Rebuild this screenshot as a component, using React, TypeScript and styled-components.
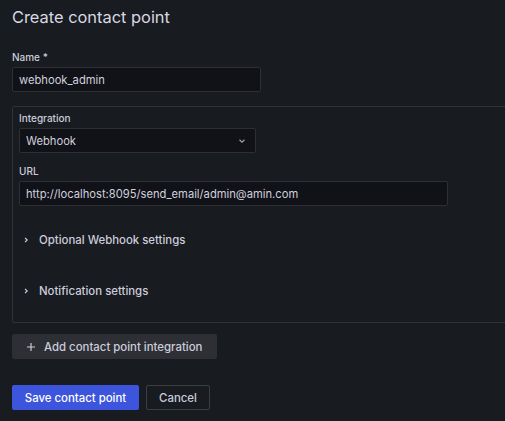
import React from "react";
import styled, { createGlobalStyle } from "styled-components";

const Global = createGlobalStyle`
  html, body { margin: 0; padding: 0; background: #181b1f; overflow: hidden; }
  body { font-family: Inter, "Noto Sans", sans-serif; color: #ccccdc; }
  * { box-sizing: border-box; }
`;

const Page = styled.div`
  width: 505px;
  height: 421px;
  overflow: hidden;
  padding: 7px 0 0 12px;
  display: flex;
  flex-direction: column;
`;

const Title = styled.h1`
  margin: 0;
  font-size: 16.4px;
  line-height: 20px;
  font-weight: 400;
  color: #d8d9e3;
`;

const Field = styled.div<{ $top?: number }>`
  display: flex;
  flex-direction: column;
  gap: 3px;
  margin-top: ${(p) => p.$top ?? 0}px;
`;

const Label = styled.label`
  font-size: 10px;
  line-height: 14px;
  font-weight: 500;
  color: #ccccdc;
`;

const Input = styled.div<{ $w: number }>`
  width: ${(p) => p.$w}px;
  height: 25px;
  background: #111217;
  border: 1px solid #2d2f35;
  border-radius: 2px;
  display: flex;
  align-items: center;
  justify-content: space-between;
  padding: 0 9px 0 6px;
  font-size: 11.2px;
  color: #d0d0dd;
`;

const Card = styled.div`
  margin-top: 14px;
  width: 520px;
  border: 1px solid #2f3237;
  border-radius: 2px;
  padding: 4px 6px 14px 6px;
  display: flex;
  flex-direction: column;
`;

const Section = styled.div`
  padding: 26px 0 9px 3px;
  display: flex;
  align-items: center;
  gap: 9px;
  font-size: 11.4px;
  line-height: 16px;
  font-weight: 500;
  color: #ccccdc;
`;

const Row = styled.div`
  display: flex;
  gap: 7px;
  margin-top: 26px;
`;

const Button = styled.button<{ $variant: "secondary" | "primary" | "outline"; $w: number }>`
  width: ${(p) => p.$w}px;
  height: 25px;
  border-radius: 2px;
  font-family: inherit;
  font-size: 11.4px;
  font-weight: 500;
  display: flex;
  align-items: center;
  justify-content: center;
  gap: 9px;
  padding: 0;
  cursor: pointer;
  color: ${(p) => (p.$variant === "primary" ? "#ffffff" : "#ccccdc")};
  background: ${(p) =>
    p.$variant === "primary" ? "#3d55dc" : p.$variant === "secondary" ? "#2d2f34" : "transparent"};
  border: 1px solid ${(p) => (p.$variant === "outline" ? "#3a3d42" : "transparent")};
`;

const AddButton = styled(Button)`
  margin-top: 11px;
  justify-content: flex-start;
  padding-left: 14px;
`;

const Chevron = ({ dir }: { dir: "down" | "right" }) => (
  <svg width="8" height="8" viewBox="0 0 8 8" fill="none">
    {dir === "down" ? (
      <path d="M1.5 2.8l2.5 2.4 2.5-2.4" stroke="#9fa0a8" strokeWidth="1.2" />
    ) : (
      <path d="M3 1.8l2.2 2.2-2.2 2.2" stroke="#ccccdc" strokeWidth="1.2" />
    )}
  </svg>
);

const Plus = () => (
  <svg width="8" height="8" viewBox="0 0 8 8">
    <path d="M4 0v8M0 4h8" stroke="#ccccdc" strokeWidth="1.2" />
  </svg>
);

export default function App() {
  return (
    <>
      <Global />
      <Page>
        <Title>Create contact point</Title>
        <Field $top={23}>
          <Label>Name *</Label>
          <Input $w={249}>webhook_admin</Input>
        </Field>
        <Card>
          <Field $top={0}>
            <Label>Integration</Label>
            <Input $w={237}>
              <span>Webhook</span>
              <Chevron dir="down" />
            </Input>
          </Field>
          <Field $top={11}>
            <Label>URL</Label>
            <Input $w={429}>http://localhost:8095/send_email/admin@amin.com</Input>
          </Field>
          <Section>
            <Chevron dir="right" />
            Optional Webhook settings
          </Section>
          <Section>
            <Chevron dir="right" />
            Notification settings
          </Section>
        </Card>
        <AddButton $variant="secondary" $w={205}>
          <Plus />
          Add contact point integration
        </AddButton>
        <Row>
          <Button $variant="primary" $w={127}>Save contact point</Button>
          <Button $variant="outline" $w={64}>Cancel</Button>
        </Row>
      </Page>
    </>
  );
}
